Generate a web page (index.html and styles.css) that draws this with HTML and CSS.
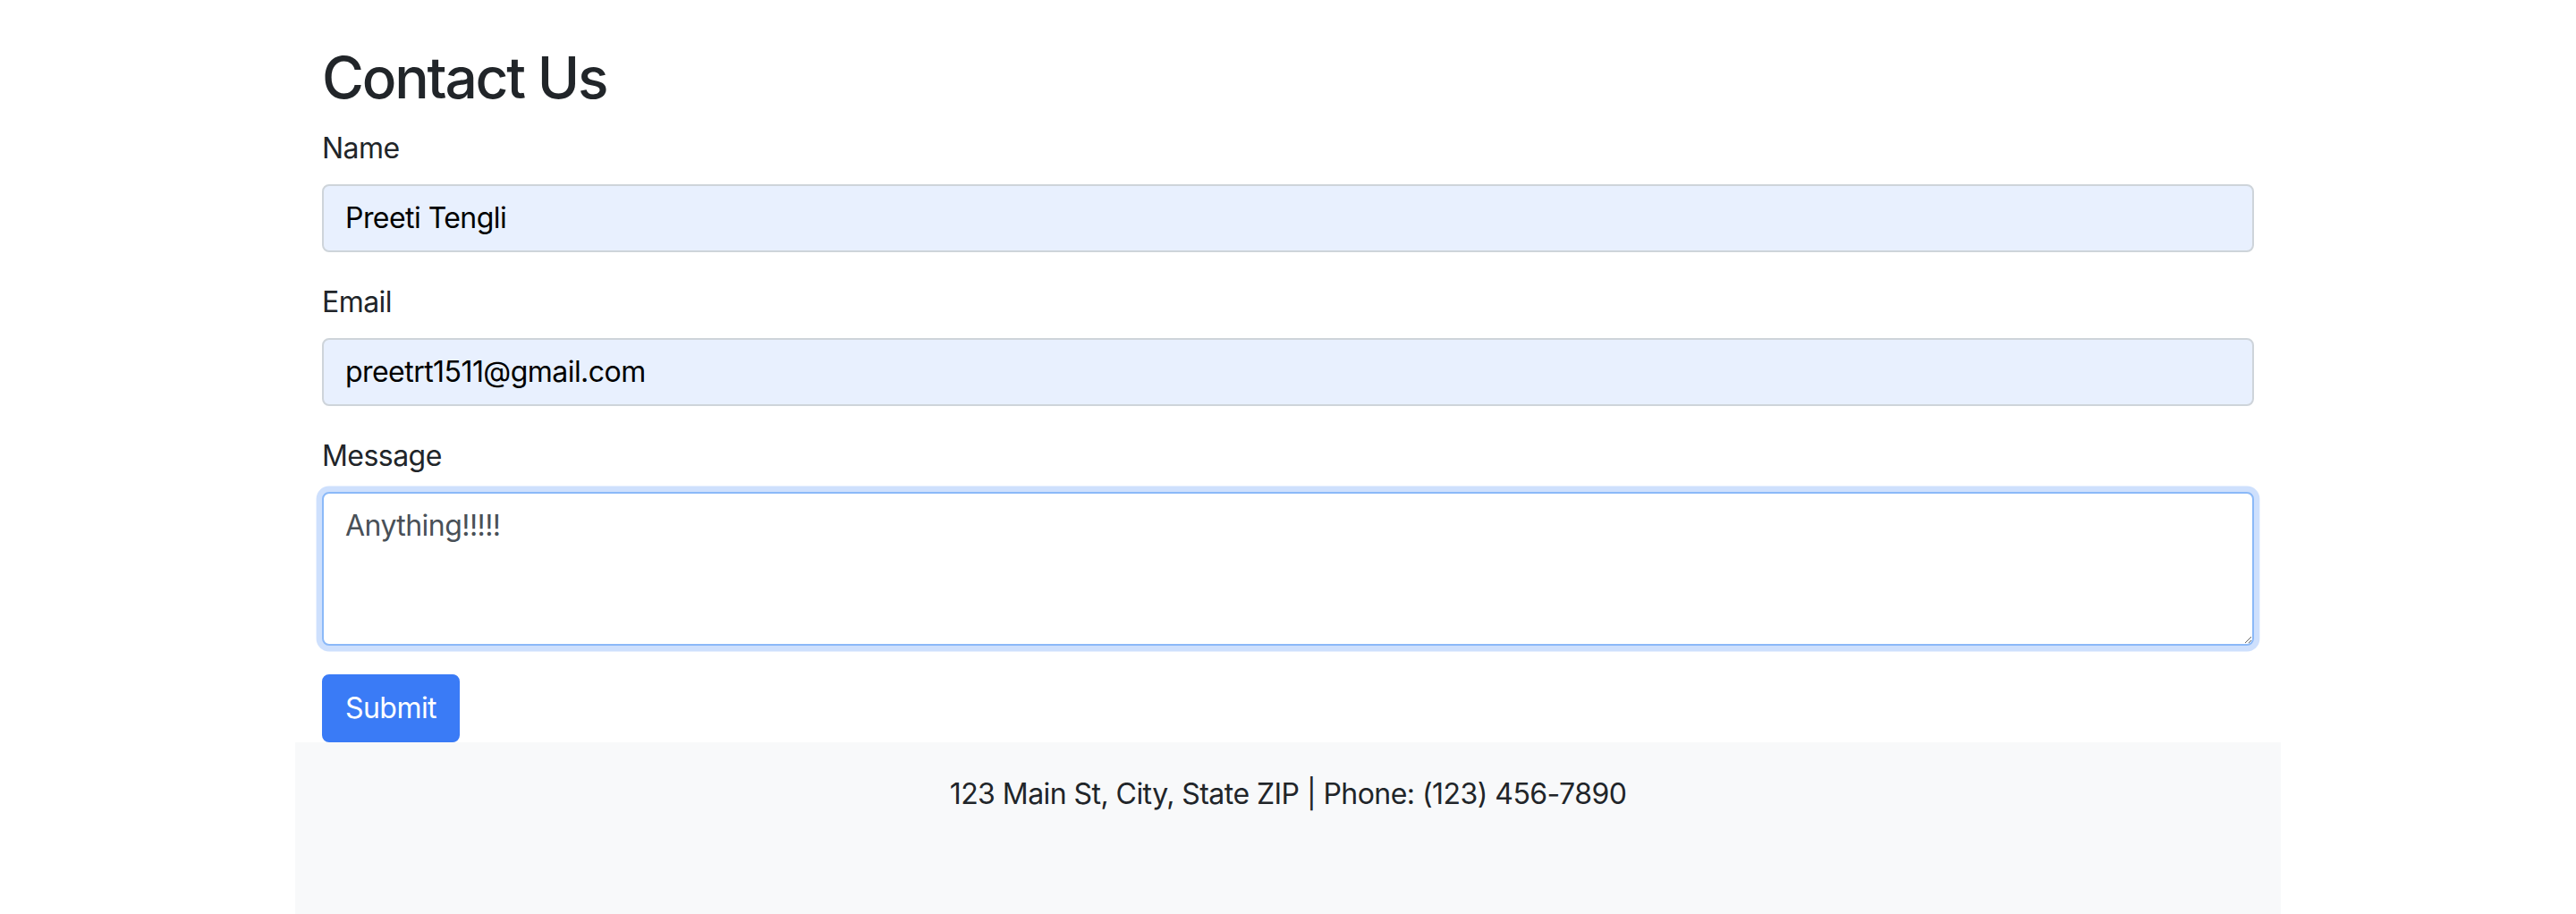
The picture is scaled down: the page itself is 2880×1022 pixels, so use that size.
FILE: index.html
```html
<!DOCTYPE html>
<html lang="en">
<head>
<meta charset="utf-8">
<title>Contact Us</title>
<link rel="stylesheet" href="styles.css">
</head>
<body>
<main class="container page">
  <h2 class="title">Contact Us</h2>
  <form class="form">
    <div class="group">
      <label class="label" for="name">Name</label>
      <input class="control autofill" id="name" type="text" value="Preeti Tengli">
    </div>
    <div class="group">
      <label class="label" for="email">Email</label>
      <input class="control autofill" id="email" type="email" value="preetrt1511@gmail.com">
    </div>
    <div class="group">
      <label class="label" for="message">Message</label>
      <textarea class="control textarea focused" id="message" rows="3">Anything!!!!!</textarea>
    </div>
    <button class="btn" type="button">Submit</button>
  </form>
</main>
<footer class="container footer">
  <p class="footer-text">123 Main St, City, State ZIP | Phone: (123) 456-7890</p>
</footer>
</body>
</html>
```
FILE: styles.css
```css
* { box-sizing: border-box; }
html, body { margin: 0; padding: 0; }
body {
  font-family: "Inter", "Liberation Sans", sans-serif;
  font-size: 32px;
  line-height: 1.5;
  letter-spacing: -0.55px;
  color: #212529;
  background: #ffffff;
  min-height: 100vh;
  display: flex;
  flex-direction: column;
}
.container {
  width: 100%;
  max-width: 2220px;
  margin: 0 auto;
  padding: 0 30px;
}
.page { padding-top: 49px; flex: 0 0 auto; }
.title {
  margin: 0 0 16px;
  font-size: 64px;
  font-weight: 500;
  line-height: 1.2;
  letter-spacing: -2.2px;
}
.form { margin: 0; }
.group { margin-bottom: 32px; }
.label {
  display: inline-block;
  margin-bottom: 16px;
}
.control {
  display: block;
  width: 100%;
  height: 76px;
  padding: 12px 24px;
  font-family: inherit;
  font-size: 32px;
  line-height: 1.5;
  letter-spacing: -0.55px;
  color: #495057;
  background: #ffffff;
  border: 2px solid #ced4da;
  border-radius: 8px;
  margin: 0;
}
.autofill {
  background: #e8f0fe;
  color: #000000;
}
.textarea {
  height: 172px;
  resize: vertical;
}
.focused {
  border-color: #8bb9f8;
  outline: none;
  box-shadow: 0 0 0 6.4px rgba(59, 130, 246, 0.25);
}
.btn {
  display: inline-block;
  height: 76px;
  padding: 12px 24px;
  font-family: inherit;
  font-size: 32px;
  line-height: 1.5;
  letter-spacing: -0.55px;
  color: #ffffff;
  background: #3a7bf6;
  border: 2px solid #3a7bf6;
  border-radius: 8px;
  margin: 0;
  vertical-align: top;
}
.footer {
  flex: 1 0 auto;
  background: #f8f9fa;
  text-align: center;
  padding-top: 34px;
  padding-bottom: 60px;
}
.footer-text { margin: 0; }
```
